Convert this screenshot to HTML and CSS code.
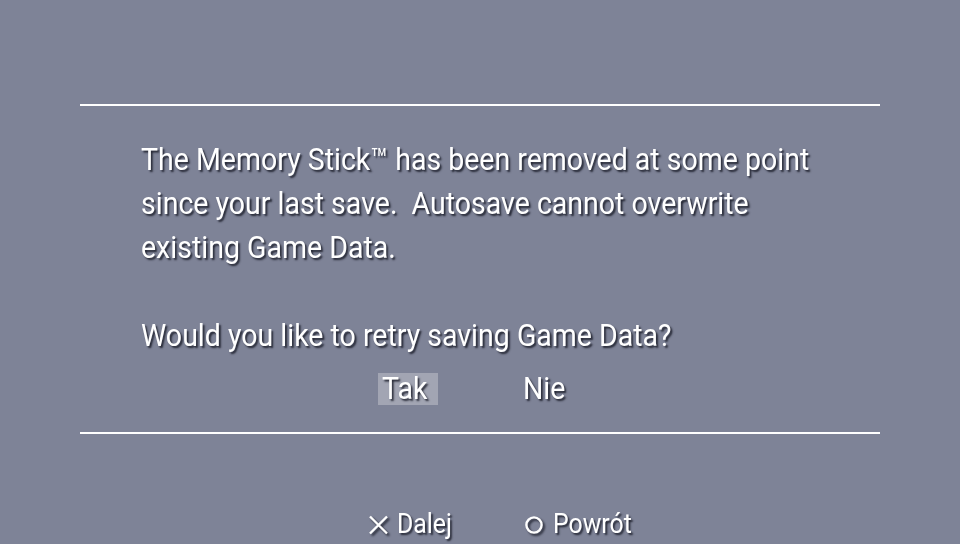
FILE: index.html
```html
<!DOCTYPE html>
<html>
<head>
<meta charset="utf-8">
<link rel="stylesheet" href="styles.css">
</head>
<body>
<div class="screen">
  <div class="dialog">
    <div class="rule"></div>
    <div class="body">
      <div class="msg">
        <p class="line">The Memory Stick™ has been removed at some point</p>
        <p class="line">since your last save.&nbsp; Autosave cannot overwrite</p>
        <p class="line">existing Game Data.</p>
        <p class="line gap">Would you like to retry saving Game Data?</p>
      </div>
      <div class="choices">
        <span class="choice selected"><span class="label">Tak</span></span>
        <span class="choice"><span class="label">Nie</span></span>
      </div>
    </div>
    <div class="rule"></div>
  </div>
  <div class="footer">
    <span class="hint first"><svg class="ico cross" viewBox="0 0 21 20"><path d="M2 1.5 L19 18.5 M19 1.5 L2 18.5" stroke="#fff" stroke-width="2.4" fill="none"/></svg><span class="label">Dalej</span></span>
    <span class="hint"><svg class="ico circle" viewBox="0 0 18 18"><circle cx="9" cy="9" r="7.6" stroke="#fff" stroke-width="2.4" fill="none"/></svg><span class="label">Powrót</span></span>
  </div>
</div>
</body>
</html>
```
FILE: styles.css
```css
html, body { margin: 0; padding: 0; }
body { width: 960px; height: 544px; overflow: hidden; background: #7e8397; }
.screen {
  width: 960px; height: 544px;
  display: flex; flex-direction: column;
  font-family: Roboto, "Liberation Sans", sans-serif;
  color: #fff;
  text-shadow: 2px 2px 2px rgba(28, 30, 42, 0.9);
}
.dialog { padding: 104px 80px 0; }
.rule { height: 2px; background: #fff; }
.body { padding: 32px 0 27px 61px; }
.msg { width: 800px; transform: scaleX(0.92); transform-origin: left top; }
.line { margin: 0; font-size: 31px; line-height: 44px; white-space: nowrap; }
.line.gap { margin-top: 44px; }
.choices { display: flex; padding-left: 237px; margin-top: 15px; height: 32px; }
.choice { display: block; height: 32px; font-size: 31px; line-height: 32px; }
.choice .label { display: inline-block; transform: scaleX(0.92); transform-origin: left center; }
.choice.selected { background: #a2a5b3; width: 56px; padding-left: 4px; }
.choice + .choice { margin-left: 85px; }
.footer { display: flex; padding-top: 74px; padding-left: 368px; }
.hint { display: flex; align-items: center; height: 32px; font-size: 27px; line-height: 32px; }
.hint.first { width: 157px; }
.hint .label { display: inline-block; transform: scaleX(0.92); transform-origin: left center; }
.ico { filter: drop-shadow(2px 2px 1px rgba(28,30,42,0.9)); }
.ico.cross { width: 21px; height: 20px; margin-right: 8px; margin-top: 2px; }
.ico.circle { width: 18px; height: 18px; margin-right: 10px; margin-top: 2px; }
```
